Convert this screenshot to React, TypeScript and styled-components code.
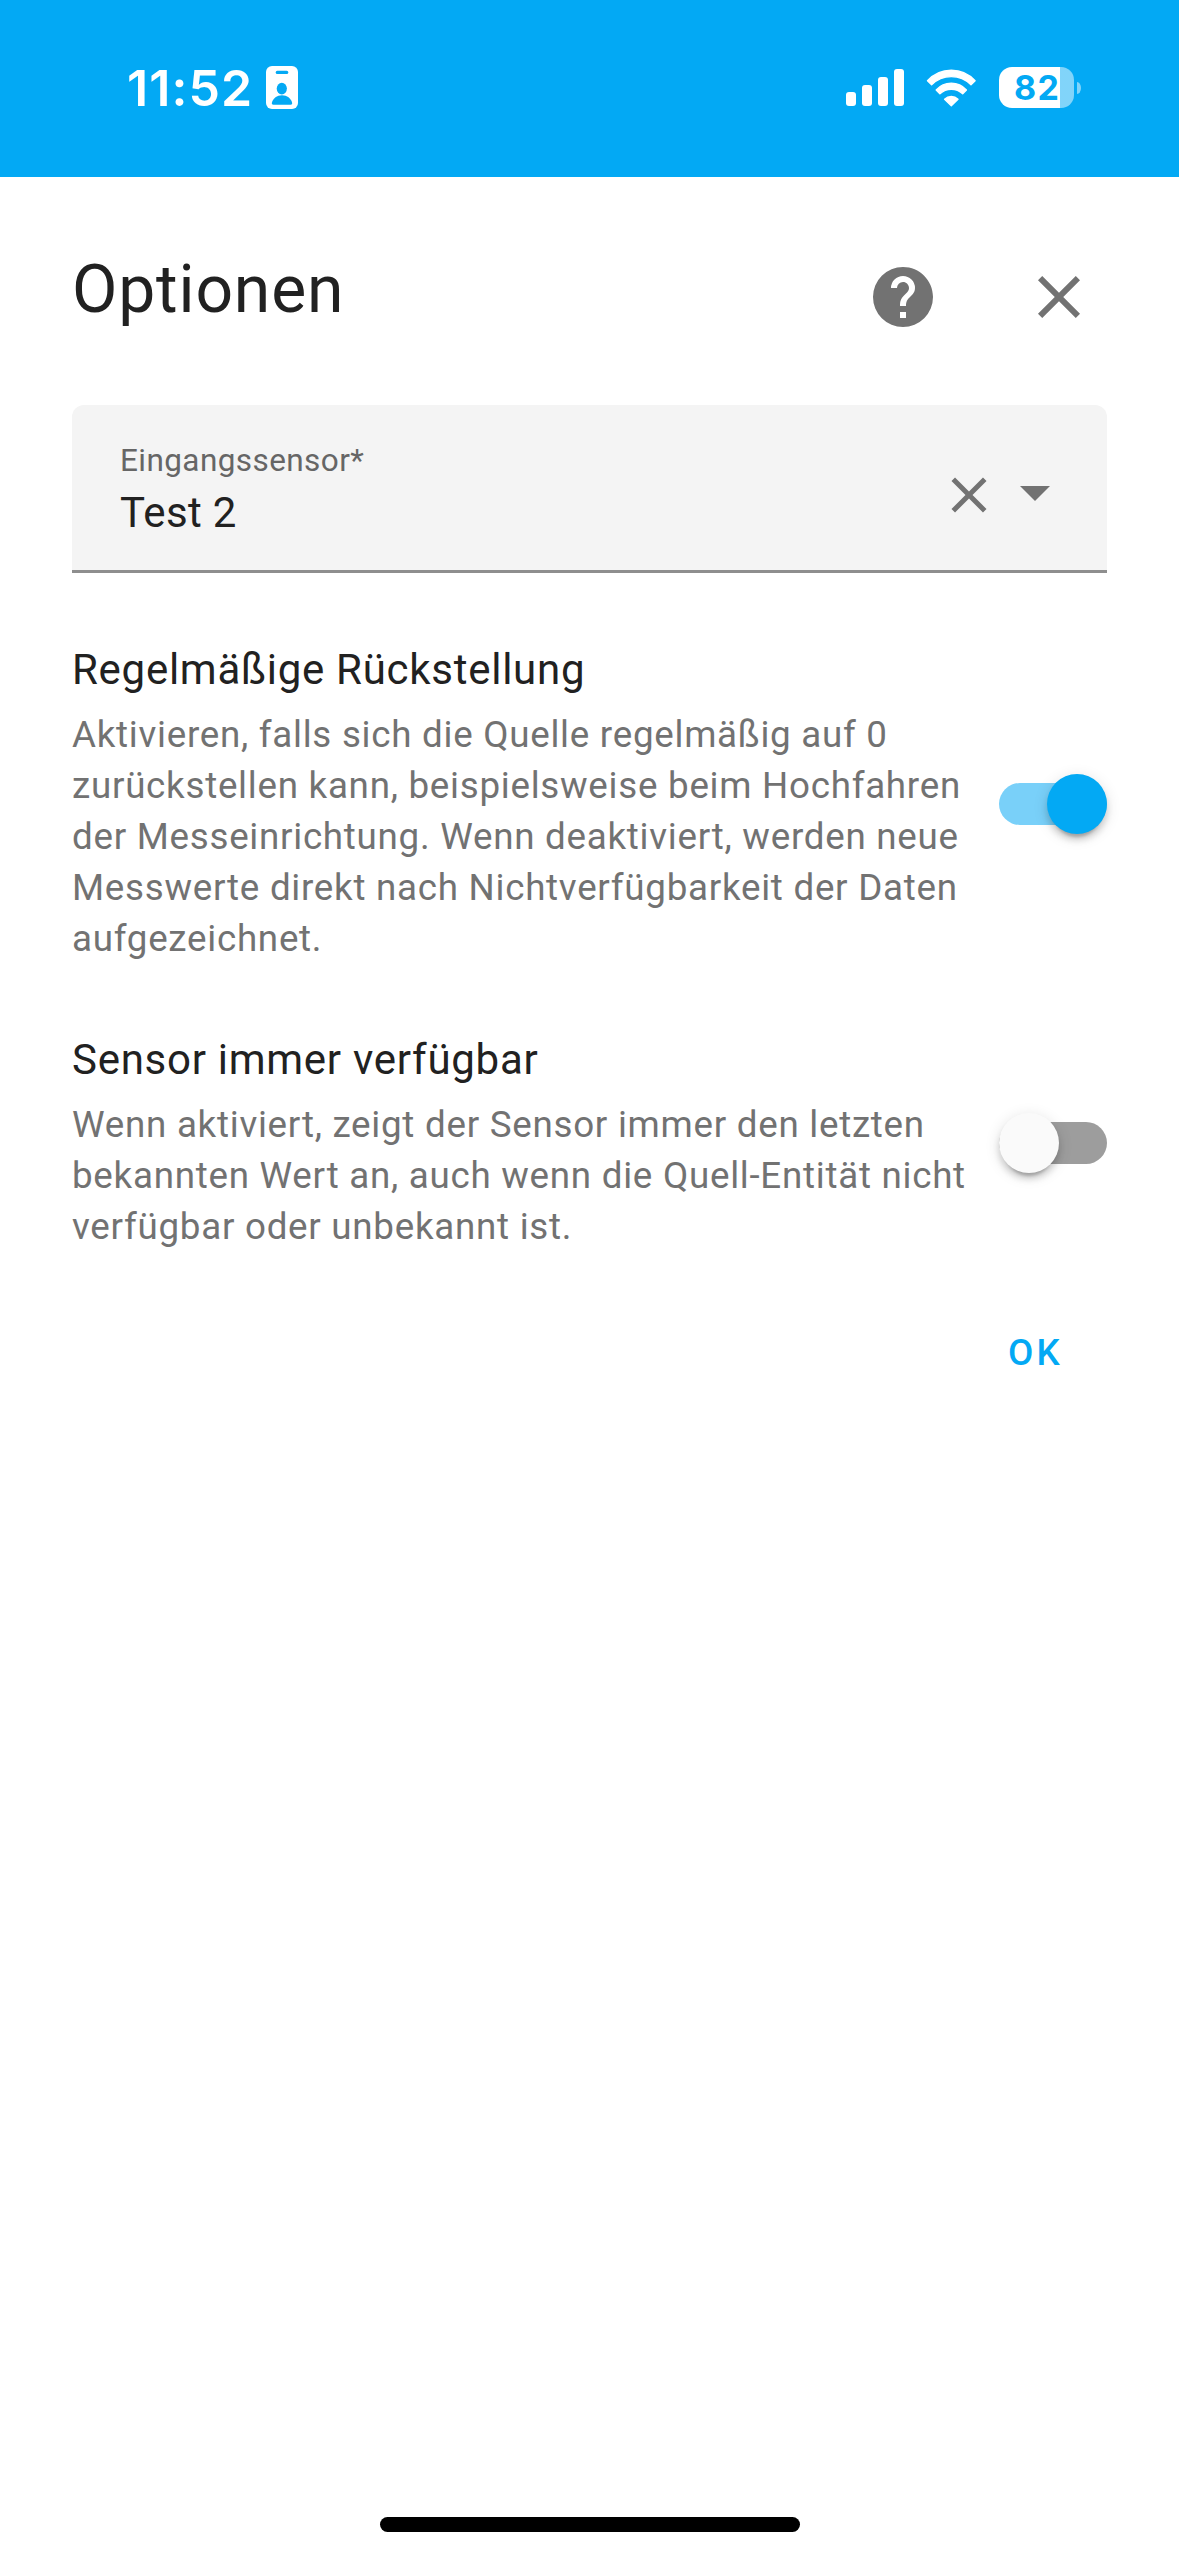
import React, { useState } from "react";
import styled, { createGlobalStyle } from "styled-components";

const GlobalStyle = createGlobalStyle`
  *, *::before, *::after {
    box-sizing: border-box;
  }
  body {
    margin: 0;
    background: #ffffff;
    color: #212121;
    font-family: Roboto, "Noto Sans", sans-serif;
  }
`;

const Screen = styled.div`
  display: flex;
  flex-direction: column;
  width: 1179px;
  height: 2556px;
  overflow: hidden;
  background: #ffffff;
`;

const StatusBar = styled.header`
  display: flex;
  justify-content: space-between;
  align-items: flex-start;
  flex: none;
  height: 177px;
  padding: 66px 98px 0 127px;
  background: #03a9f4;
  color: #ffffff;
`;

const StatusGroup = styled.div<{ $gap: number }>`
  display: flex;
  align-items: center;
  gap: ${({ $gap }) => $gap}px;
  height: 43px;
`;

const Time = styled.span`
  padding-top: 2px;
  font: 600 50px/43px Inter, sans-serif;
  letter-spacing: 1.1px;
`;

const Battery = styled.div`
  display: flex;
  align-items: center;
  gap: 3px;
`;

const BatteryBody = styled.div<{ $level: number }>`
  width: 75px;
  height: 41px;
  border-radius: 13px;
  background: linear-gradient(
    to right,
    #ffffff ${({ $level }) => $level}%,
    rgba(255, 255, 255, 0.5) ${({ $level }) => $level}%
  );
  color: #03a9f4;
  font: 700 34px/41px Inter, sans-serif;
  letter-spacing: 1.3px;
  padding-left: 15px;
`;

const BatteryCap = styled.div`
  width: 4px;
  height: 12px;
  border-radius: 0 4px 4px 0 / 0 6px 6px 0;
  background: rgba(255, 255, 255, 0.5);
`;

const Dialog = styled.main`
  display: flex;
  flex-direction: column;
  flex: 1;
  padding: 0 72px;
`;

const DialogHeader = styled.div`
  display: flex;
  align-items: flex-start;
  height: 228px;
  padding: 74px 12px 0 0;
`;

const Title = styled.h1`
  flex: 1;
  margin: 0;
  font-size: 66px;
  font-weight: 400;
  line-height: 78px;
  letter-spacing: 0.0125em;
`;

const HeaderActions = styled.div`
  display: flex;
  gap: 84px;
  padding-top: 10px;
`;

const IconButton = styled.button<{ $size: number }>`
  display: flex;
  flex: none;
  width: ${({ $size }) => $size}px;
  height: ${({ $size }) => $size}px;
  padding: 0;
  border: 0;
  background: none;
  color: #727272;

  svg {
    width: 100%;
    height: 100%;
    fill: currentColor;
  }
`;

const SelectField = styled.div`
  display: flex;
  align-items: flex-start;
  height: 168px;
  padding: 34px 36px 0 48px;
  border-bottom: 3px solid #8e8e8e;
  border-radius: 12px 12px 0 0;
  background: #f4f4f4;
`;

const FieldText = styled.div`
  display: flex;
  flex: 1;
  flex-direction: column;
  gap: 4px;
  padding-top: 1px;
`;

const FieldLabel = styled.span`
  color: #666666;
  font-size: 31.5px;
  line-height: 42px;
  letter-spacing: 0.42px;
`;

const FieldValue = styled.span`
  font-size: 42px;
  line-height: 54px;
  letter-spacing: 0.3px;
`;

const FieldActions = styled.div`
  display: flex;
  align-items: center;
  padding-top: 17px;
`;

const ClearSlot = styled.div`
  padding-top: 6px;
`;

const Settings = styled.div`
  display: flex;
  flex-direction: column;
  gap: 64px;
  padding-top: 65px;
`;

const Setting = styled.section`
  display: flex;
  align-items: center;
  justify-content: space-between;
`;

const SettingText = styled.div`
  width: 903px;
  letter-spacing: 0.73px;
`;

const SettingTitle = styled.h2`
  margin: 0 0 8px;
  font-size: 42px;
  font-weight: 400;
  line-height: 63px;
`;

const SettingHint = styled.p`
  margin: 0;
  color: #727272;
  font-size: 36.75px;
  line-height: 51px;
`;

const Track = styled.button<{ $on: boolean }>`
  display: flex;
  flex: none;
  align-items: center;
  justify-content: ${({ $on }) => ($on ? "flex-end" : "flex-start")};
  width: 108px;
  height: 42px;
  margin-top: 6px;
  padding: 0;
  border: 0;
  border-radius: 21px;
  background: ${({ $on }) => ($on ? "#79d0f9" : "#9d9d9d")};
`;

const Thumb = styled.span<{ $on: boolean }>`
  flex: none;
  width: 60px;
  height: 60px;
  border-radius: 50%;
  background: ${({ $on }) => ($on ? "#03a9f4" : "#fafafa")};
  box-shadow:
    0 9px 3px -6px rgba(0, 0, 0, 0.2),
    0 6px 6px 0 rgba(0, 0, 0, 0.14),
    0 3px 15px 0 rgba(0, 0, 0, 0.12);
`;

const DialogActions = styled.div`
  display: flex;
  justify-content: flex-end;
  padding: 71px 44px 0 0;
`;

const TextButton = styled.button`
  padding: 0;
  border: 0;
  background: none;
  color: #03a9f4;
  font: 500 36.75px/60px Roboto, sans-serif;
  letter-spacing: 3.28px;
`;

const HomeArea = styled.footer`
  display: flex;
  justify-content: center;
  flex: none;
  height: 39px;
`;

const HomeIndicator = styled.div`
  width: 420px;
  height: 15px;
  border-radius: 8px;
  background: #000000;
`;

const BadgeIcon = () => (
  <svg width="32" height="43" viewBox="0 0 32 43">
    <rect width="32" height="43" rx="6" fill="#fff" />
    <g fill="#03a9f4">
      <rect x="9.7" y="4.7" width="12.6" height="3.3" rx="1.6" />
      <ellipse cx="15.8" cy="22.6" rx="5.1" ry="5.8" />
      <path d="M7.4 38.7c-1.2 0-1.8-.8-1.5-2C7 32.4 11 29.3 16 29.3s9 3.1 10.1 7.4c.3 1.2-.3 2-1.5 2z" />
    </g>
  </svg>
);

const SignalIcon = () => (
  <svg width="58" height="37" viewBox="0 0 58 37" fill="#fff">
    <rect x="0" y="23" width="10" height="14" rx="3" />
    <rect x="16" y="16" width="10" height="21" rx="3" />
    <rect x="32" y="8" width="10" height="29" rx="3" />
    <rect x="48" y="0" width="10" height="37" rx="3" />
  </svg>
);

const WifiIcon = () => (
  <svg width="51" height="38" viewBox="0 0 51 38" fill="#fff" stroke="#fff" strokeWidth="1.4" strokeLinejoin="round">
    <path d="M1.5 11.8A32 32 0 0 1 49.1 11.8L45 15.8A27.8 27.8 0 0 0 5.6 15.8Z" />
    <path d="M10.2 20.9A20.2 20.2 0 0 1 40.4 20.9L36.7 24.8A16.6 16.6 0 0 0 13.9 24.8Z" />
    <path d="M18.6 30.2A9.6 9.6 0 0 1 32 30.2L25.3 36.8Z" />
  </svg>
);

const HelpIcon = () => (
  <svg viewBox="0 0 24 24">
    <path d="M15.07 11.25L14.17 12.17C13.45 12.89 13 13.5 13 15H11V14.5C11 13.39 11.45 12.39 12.17 11.67L13.41 10.41C13.78 10.05 14 9.55 14 9C14 7.89 13.1 7 12 7A2 2 0 0 0 10 9H8A4 4 0 0 1 12 5A4 4 0 0 1 16 9C16 9.88 15.64 10.67 15.07 11.25M13 19H11V17H13M12 2A10 10 0 0 0 2 12A10 10 0 0 0 12 22A10 10 0 0 0 22 12C22 6.47 17.5 2 12 2Z" />
  </svg>
);

const CloseIcon = () => (
  <svg viewBox="0 0 24 24">
    <path d="M19 6.41L17.59 5L12 10.59L6.41 5L5 6.41L10.59 12L5 17.59L6.41 19L12 13.41L17.59 19L19 17.59L13.41 12L19 6.41Z" />
  </svg>
);

const MenuDownIcon = () => (
  <svg viewBox="0 0 24 24">
    <path d="M7 10L12 15L17 10H7Z" />
  </svg>
);

interface SwitchSettingProps {
  title: string;
  hint: string;
  initial: boolean;
}

function SwitchSetting({ title, hint, initial }: SwitchSettingProps) {
  const [on, setOn] = useState(initial);
  return (
    <Setting>
      <SettingText>
        <SettingTitle>{title}</SettingTitle>
        <SettingHint>{hint}</SettingHint>
      </SettingText>
      <Track $on={on} role="switch" aria-checked={on} onClick={() => setOn(!on)}>
        <Thumb $on={on} />
      </Track>
    </Setting>
  );
}

export default function App() {
  return (
    <Screen>
      <GlobalStyle />
      <StatusBar>
        <StatusGroup $gap={13}>
          <Time>11:52</Time>
          <BadgeIcon />
        </StatusGroup>
        <StatusGroup $gap={22}>
          <SignalIcon />
          <WifiIcon />
          <Battery>
            <BatteryBody $level={82}>82</BatteryBody>
            <BatteryCap />
          </Battery>
        </StatusGroup>
      </StatusBar>
      <Dialog>
        <DialogHeader>
          <Title>Optionen</Title>
          <HeaderActions>
            <IconButton $size={72}>
              <HelpIcon />
            </IconButton>
            <IconButton $size={72}>
              <CloseIcon />
            </IconButton>
          </HeaderActions>
        </DialogHeader>
        <SelectField>
          <FieldText>
            <FieldLabel>Eingangssensor*</FieldLabel>
            <FieldValue>Test 2</FieldValue>
          </FieldText>
          <FieldActions>
            <ClearSlot>
              <IconButton $size={60}>
                <CloseIcon />
              </IconButton>
            </ClearSlot>
            <IconButton $size={72}>
              <MenuDownIcon />
            </IconButton>
          </FieldActions>
        </SelectField>
        <Settings>
          <SwitchSetting
            title="Regelmäßige Rückstellung"
            hint="Aktivieren, falls sich die Quelle regelmäßig auf 0 zurückstellen kann, beispielsweise beim Hochfahren der Messeinrichtung. Wenn deaktiviert, werden neue Messwerte direkt nach Nichtverfügbarkeit der Daten aufgezeichnet."
            initial={true}
          />
          <SwitchSetting
            title="Sensor immer verfügbar"
            hint="Wenn aktiviert, zeigt der Sensor immer den letzten bekannten Wert an, auch wenn die Quell-Entität nicht verfügbar oder unbekannt ist."
            initial={false}
          />
        </Settings>
        <DialogActions>
          <TextButton>OK</TextButton>
        </DialogActions>
      </Dialog>
      <HomeArea>
        <HomeIndicator />
      </HomeArea>
    </Screen>
  );
}
